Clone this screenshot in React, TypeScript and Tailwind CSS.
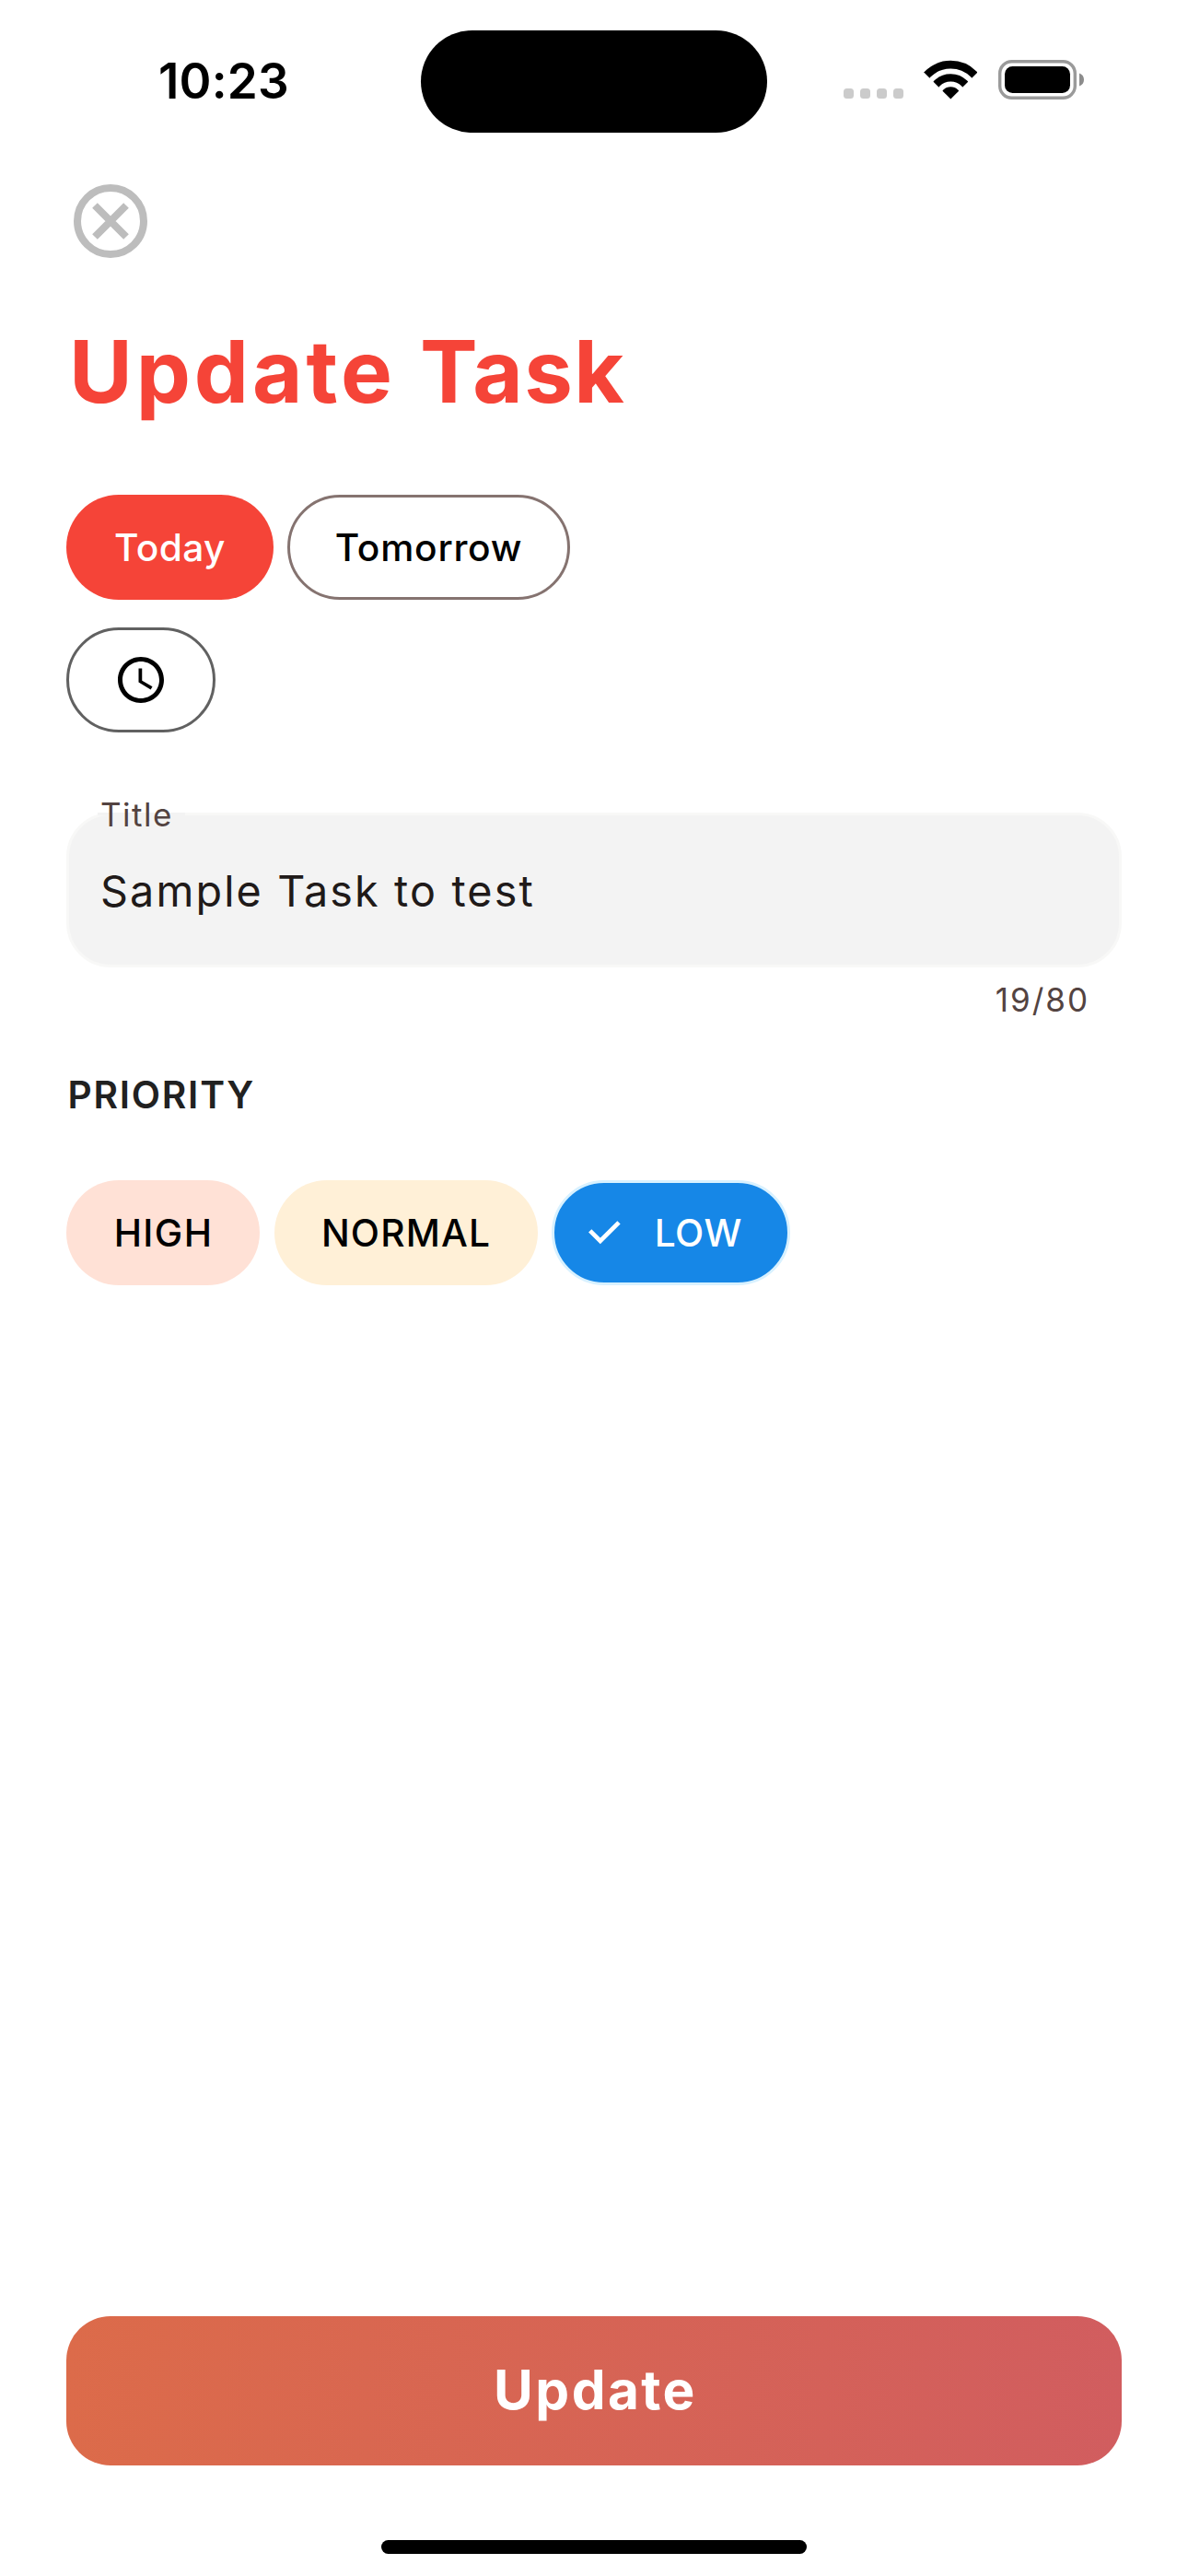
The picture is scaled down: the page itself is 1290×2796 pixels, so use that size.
import type { ReactNode } from 'react';
import { MdAccessTime } from 'react-icons/md';

function WifiIcon() {
  return (
    <svg width="58" height="43" viewBox="0 0 58 43" fill="none">
      <defs>
        <clipPath id="wifi-wedge">
          <path d="M29.3 42.6 L-14 -0.7 H72.6 Z" />
        </clipPath>
      </defs>
      <g clipPath="url(#wifi-wedge)">
        <circle cx="29.3" cy="40.5" r="35.3" stroke="#000" strokeWidth="8.7" />
        <circle cx="29.3" cy="40.5" r="21.1" stroke="#000" strokeWidth="8.4" />
        <circle cx="29.3" cy="40.5" r="11.2" fill="#000" />
      </g>
    </svg>
  );
}

function BatteryIcon() {
  return (
    <svg width="94" height="44" viewBox="0 0 94 44" fill="none">
      <rect x="1.7" y="1.7" width="81.6" height="39.6" rx="13" stroke="#9a9a9a" strokeWidth="3.4" />
      <rect x="7" y="7" width="71" height="29" rx="8.5" fill="#000" />
      <path d="M88 14.5 C91.5 15.8 93 18.5 93 21.5 C93 24.5 91.5 27.2 88 28.5 Z" fill="#8c8c8c" />
    </svg>
  );
}

function CloseIcon() {
  return (
    <svg width="96" height="96" viewBox="0 0 96 96" fill="none" stroke="#bdbdbd" strokeWidth="8">
      <circle cx="48" cy="48" r="36" />
      <path d="M31 31 L65 65 M65 31 L31 65" />
    </svg>
  );
}

function CheckIcon() {
  return (
    <svg width="35" height="26" viewBox="0 0 35 26" fill="none" stroke="#fff" strokeWidth="4.7">
      <path d="M1.7 10.9 L12.8 22 L33 1.8" />
    </svg>
  );
}

function StatusBar() {
  return (
    <header className="flex h-[177px] shrink-0 items-center pl-[172px]">
      <time className="w-[285px] pb-px text-[53px] leading-none font-semibold tracking-[0.18px]">10:23</time>
      <div className="h-[111px] w-[376px] rounded-full bg-black" />
      <div className="ml-[83px] flex gap-[7px] pt-[26px]">
        <span className="size-[11px] rounded-[3.5px] bg-[#cbcbcb]" />
        <span className="size-[11px] rounded-[3.5px] bg-[#cbcbcb]" />
        <span className="size-[11px] rounded-[3.5px] bg-[#cbcbcb]" />
        <span className="size-[11px] rounded-[3.5px] bg-[#cbcbcb]" />
      </div>
      <div className="ml-[22px] pb-1">
        <WifiIcon />
      </div>
      <div className="ml-[23px] pb-[3px]">
        <BatteryIcon />
      </div>
    </header>
  );
}

function Chip({ className, children }: { className: string; children: ReactNode }) {
  return (
    <button
      type="button"
      className={`flex h-[114px] items-center rounded-full text-[40.7px] leading-none font-medium ${className}`}
    >
      {children}
    </button>
  );
}

export default function App() {
  return (
    <div className="flex h-[2796px] w-[1290px] flex-col bg-white font-['Inter',sans-serif] text-black">
      <StatusBar />
      <main className="flex grow flex-col px-[72px]">
        <button type="button" aria-label="Close" className="mt-[15px] size-24">
          <CloseIcon />
        </button>
        <h1 className="mt-[59px] pl-[3px] text-[94px] leading-[112px] font-bold tracking-[3.9px] text-[#f54438]">
          Update <span className="tracking-[1.4px]">Task</span>
        </h1>

        <div className="mt-[78px] flex gap-[15px]">
          <Chip className="w-[225px] justify-center bg-[#f54438] pt-[2px] tracking-[0.36px] text-white">Today</Chip>
          <Chip className="w-[307px] justify-center border-3 border-[#857370] pt-[2px] tracking-[0.75px]">Tomorrow</Chip>
        </div>
        <Chip className="mt-[30px] w-[162px] justify-center border-3 border-[#616161]">
          <MdAccessTime className="size-[60px]" />
        </Chip>

        <div className="relative mt-[87px] flex h-[168px] items-center rounded-[48px] border-3 border-[#f8f8f7] bg-[#f3f3f3] pt-[2px] pl-[34px] text-[46.7px] leading-none tracking-[2.12px] text-[#201a19]">
          <span className="absolute -top-[22px] left-[31px] flex w-[95px] items-center bg-[linear-gradient(#f3f3f3,#f3f3f3)] bg-[length:100%_3px] bg-[position:0_19px] bg-no-repeat pl-[3px] text-[35px] leading-[42px] tracking-[1.5px] text-[#534341]">
            Title
          </span>
          Sample Task to test
        </div>
        <p className="mt-[14px] pr-[35px] text-right text-[35px] leading-[42px] tracking-[2px] text-[#534341]">19/80</p>

        <h2 className="mt-[59px] pl-[1.5px] text-[40.7px] leading-[48px] font-semibold tracking-[1.75px] text-[#212121]">
          PRIORITY
        </h2>
        <div className="mt-[68px] flex">
          <Chip className="w-[210px] justify-center bg-[#ffe1d6] pt-[2px] pl-px tracking-[1.4px]">HIGH</Chip>
          <Chip className="ml-4 w-[286px] justify-center bg-[#fff0d7] pt-[2px] tracking-[1.14px]">NORMAL</Chip>
          <Chip className="ml-[15px] w-[259px] gap-[37px] border-3 border-[#d8f1ff] bg-[#1687e7] pl-[36.7px] tracking-[0.5px] text-white">
            <CheckIcon />
            <span className="pt-[2px]">LOW</span>
          </Chip>
        </div>

        <button
          type="button"
          className="mt-auto flex h-[162px] items-center justify-center rounded-[48px] bg-linear-to-r/srgb from-[#dc6b4a] to-[#d15d5f] pb-[2px] pl-[3px] text-[58.5px] leading-none font-bold tracking-[2.42px] text-white"
        >
          Update
        </button>
      </main>
      <div className="mx-auto mt-[81px] mb-6 h-[15px] w-[462px] shrink-0 rounded-full bg-black" />
    </div>
  );
}
